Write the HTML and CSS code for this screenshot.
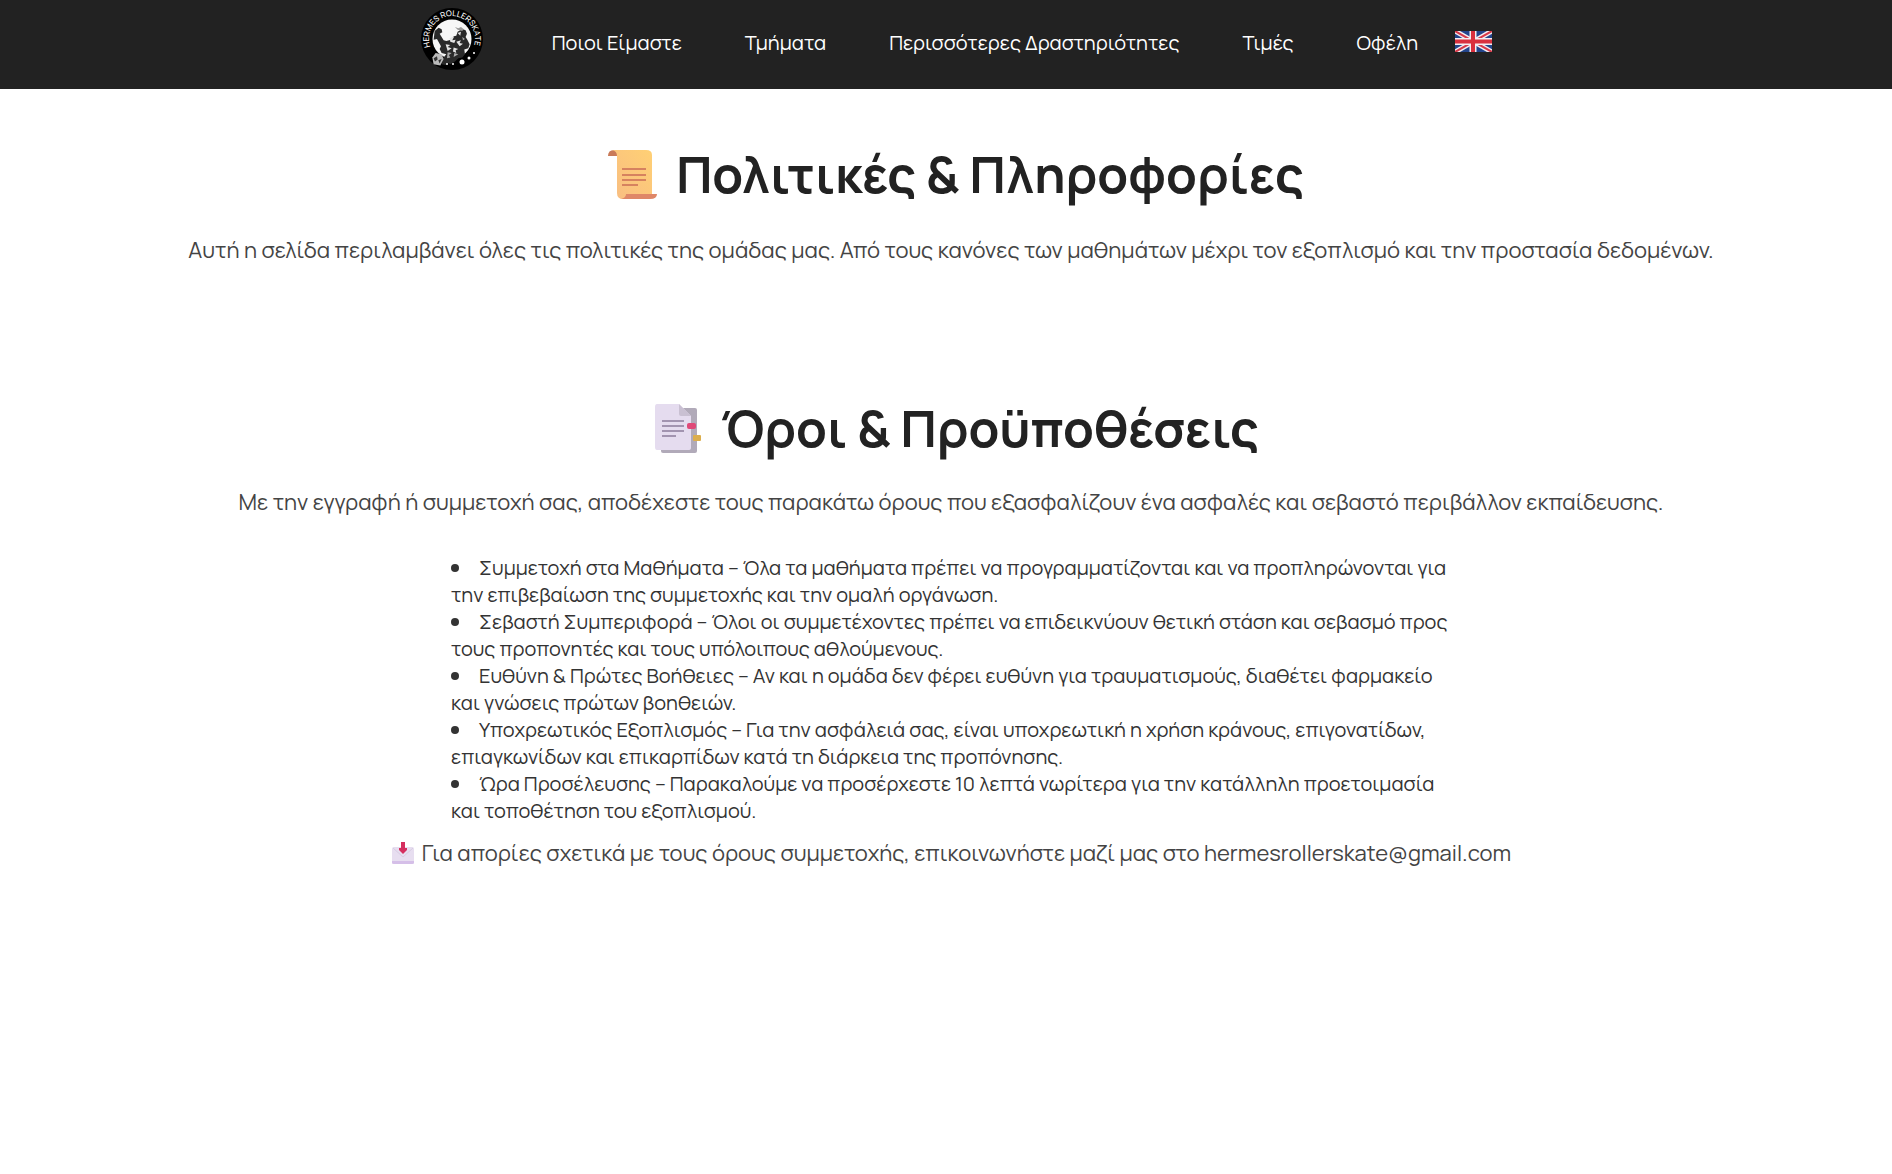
FILE: index.html
```html
<!DOCTYPE html>
<html lang="el">
<head>
<meta charset="utf-8">
<meta name="viewport" content="width=device-width, initial-scale=1">
<title>Πολιτικές &amp; Πληροφορίες</title>
<link rel="stylesheet" href="styles.css">
</head>
<body>
<header class="site-header">
  <a class="logo" href="#" aria-label="Hermes Rollerskate">
    <svg viewBox="0 0 64 64" width="64" height="64">
      <circle cx="32" cy="32" r="31" fill="#000"/>
      <circle cx="32" cy="32" r="19.500" fill="#f6f6f6"/>
      <path id="ring" d="M10.400 40A23 23 0 1 1 53.600 40" fill="none"/>
      <text class="logo-text"><textPath href="#ring">HERMES ROLLERSKATE</textPath></text>
      <g transform="translate(-1 -2) scale(.333)">
        <path d="M47 78l12-10 9 5 2 9-8 4 12 20 8 2 14-4 8-10 8-2 4-12 14-8 10 4 4 10-4 10 6 10 6 12-4 12-12 4 2 14-8 10-12 2-10 10-14 8-6-4-8 6-12-2 6-20 8-10-14-4-6-12 4-8-12-22-10 2z" fill="#2a2a2a"/>
        <path d="M108 66l10 4 8-4 8 6-4 6-14-4z" fill="#999"/>
        <path d="M92 100l14-6-6 12 10-2-4 10-12-4zM116 84l10-4-2 12zM112 110l14-4-4 8 10 2-10 8zM80 118l14 2-8 6 12 4-12 8zM104 128l14 4-8 4 2 8-10-4z" fill="#e4e4e4"/>
        <path d="M86 142l12 2-8 6 4 8-10 2zM106 144l12 4-14 8zM130 96l8 6-6 4z" fill="#aaa"/>
        <path d="M40 158l10-14 18 4 6 14-10 20-20-4z" fill="#bbb"/>
        <path d="M44 160l10-6 2 10-8 6zM58 166l10-4-6 14z" fill="#333"/>
      </g>
      <circle cx="27" cy="57" r="1" fill="#fff"/>
      <circle cx="33" cy="57" r="1" fill="#fff"/>
      <circle cx="42" cy="55" r="2.500" fill="#fff"/>
      <circle cx="49" cy="51" r="1.500" fill="#fff"/>
      <circle cx="54" cy="46" r="1" fill="#fff"/>
    </svg>
  </a>
  <nav class="menu">
    <a href="#">Ποιοι Είμαστε</a>
    <a href="#">Τμήματα</a>
    <a href="#">Περισσότερες Δραστηριότητες</a>
    <a href="#">Τιμές</a>
    <a href="#">Οφέλη</a>
  </nav>
  <a class="language" href="#" aria-label="English">
    <svg viewBox="0 0 37 21" width="37" height="21">
      <path fill="#23458c" d="M0 0h37v21H0z"/>
      <path d="M0 0l37 21M37 0L0 21" stroke="#f3eef2" stroke-width="5"/>
      <path d="M0 0l37 21M37 0L0 21" stroke="#d63a4a" stroke-width="2"/>
      <path d="M18 0v21M0 10.500h37" stroke="#f3eef2" stroke-width="7"/>
      <path d="M18 0v21M0 10.500h37" stroke="#d9303e" stroke-width="4"/>
    </svg>
  </a>
</header>
<main class="content">
  <section class="intro">
    <h1 class="title">
      <svg viewBox="0 -1 50 50" width="50" height="50" aria-hidden="true">
        <defs><linearGradient id="paper" x1="1" y1="0" x2="0" y2="1"><stop offset="0" stop-color="#ffd074"/><stop offset="1" stop-color="#f8bd83"/></linearGradient></defs>
        <path d="M0 6q0-6 6-6l5 2v4H0z" fill="#c97a58"/>
        <path d="M4 0h34q6 0 6 5v42q-2 2-8 2H15q-6 0-6-6V6q0-5-5-6z" fill="url(#paper)"/>
        <path d="M18 44h31q0 5-7 5H13q5-1 5-5z" fill="#df8768"/>
        <path d="M14 19h24M14 25h24M14 30h24M14 35h16" stroke="#d6825f" stroke-width="2"/>
      </svg>
      <span>Πολιτικές &amp; Πληροφορίες</span>
    </h1>
    <p class="lead">Αυτή η σελίδα περιλαμβάνει όλες τις πολιτικές της ομάδας μας. Από τους κανόνες των μαθημάτων μέχρι τον εξοπλισμό και την προστασία δεδομένων.</p>
  </section>
  <section class="terms">
    <h2 class="title">
      <svg viewBox="0 -1 50 50" width="50" height="50" aria-hidden="true">
        <rect x="8" y="4" width="36" height="45" rx="2" fill="#b1aab9"/>
        <path d="M4 0h22l12 12v32q0 2-3 2H4q-2 0-2-3V3q0-3 2-3z" fill="#e5dcef"/>
        <path d="M26 0l12 12H28q-2 0-2-2z" fill="#c9c0d2"/>
        <path d="M9 17h22M9 22h22M9 27h22M9 32h14" stroke="#a294b0" stroke-width="2"/>
        <rect x="34" y="19" width="9" height="6" rx="2" fill="#df4978"/>
        <rect x="40" y="31" width="8" height="6" rx="1" fill="#dcae4d"/>
      </svg>
      <span>Όροι &amp; Προϋποθέσεις</span>
    </h2>
    <p class="lead">Με την εγγραφή ή συμμετοχή σας, αποδέχεστε τους παρακάτω όρους που εξασφαλίζουν ένα ασφαλές και σεβαστό περιβάλλον εκπαίδευσης.</p>
    <ul class="rules">
      <li>Συμμετοχή στα Μαθήματα – Όλα τα μαθήματα πρέπει να προγραμματίζονται και να προπληρώνονται για την επιβεβαίωση της συμμετοχής και την ομαλή οργάνωση.</li>
      <li>Σεβαστή Συμπεριφορά – Όλοι οι συμμετέχοντες πρέπει να επιδεικνύουν θετική στάση και σεβασμό προς τους προπονητές και τους υπόλοιπους αθλούμενους.</li>
      <li>Ευθύνη &amp; Πρώτες Βοήθειες – Αν και η ομάδα δεν φέρει ευθύνη για τραυματισμούς, διαθέτει φαρμακείο και γνώσεις πρώτων βοηθειών.</li>
      <li>Υποχρεωτικός Εξοπλισμός – Για την ασφάλειά σας, είναι υποχρεωτική η χρήση κράνους, επιγονατίδων, επιαγκωνίδων και επικαρπίδων κατά τη διάρκεια της προπόνησης.</li>
      <li>Ώρα Προσέλευσης – Παρακαλούμε να προσέρχεστε 10 λεπτά νωρίτερα για την κατάλληλη προετοιμασία και τοποθέτηση του εξοπλισμού.</li>
    </ul>
    <p class="contact">
      <svg viewBox="0 0 24 24" width="24" height="24" aria-hidden="true">
        <rect x="1" y="6" width="22" height="17" rx="2" fill="#e7def0"/>
        <path d="M1 20h22v2q0 1-2 1H3q-2 0-2-1z" fill="#d5bfe8"/>
        <path d="M2 7l10 9L22 7" fill="none" stroke="#d8cde3"/>
        <path d="M10 1h4v6h2v2l-4 4-4-4V7h2z" fill="#d52f5f"/>
      </svg>
      <span>Για απορίες σχετικά με τους όρους συμμετοχής, επικοινωνήστε μαζί μας στο hermesrollerskate@gmail.com</span>
    </p>
  </section>
</main>
</body>
</html>
```
FILE: styles.css
```css
* {
  box-sizing: border-box;
}

body {
  margin: 0;
  background: #fff;
  color: #222;
  font-family: Manrope, Inter, "Open Sans", sans-serif;
}

.site-header {
  display: flex;
  justify-content: center;
  align-items: flex-start;
  min-height: 89px;
  padding: 7px 0 0 20px;
  background: #222;
}

.logo,
.language {
  display: flex;
}

.logo-text {
  fill: #fff;
  font-size: 8px;
  font-weight: 500;
}

.menu {
  display: flex;
  gap: 63px;
  margin: 0 37px 0 68px;
  padding-top: 22px;
}

.menu a {
  color: #fff;
  font-size: 20px;
  line-height: 28px;
  text-decoration: none;
}

.language {
  padding-top: 24px;
}

.content {
  padding: 52px 0 56px 10px;
}

.title {
  display: flex;
  justify-content: center;
  align-items: center;
  gap: 18px;
  margin: 0;
  padding-left: 10px;
  font-size: 50px;
  font-weight: 700;
  line-height: 66px;
}

.lead {
  margin: 26px 0 0;
  color: #444;
  font-size: 22px;
  line-height: 34px;
  text-align: center;
}

.terms {
  padding-top: 128px;
}

.terms .lead {
  margin-top: 24px;
}

.rules {
  max-width: 1000px;
  margin: 35px auto 0;
  padding: 0;
  color: #333;
  font-size: 20px;
  line-height: 27px;
  list-style: none;
}

.rules li::before {
  content: "";
  display: inline-block;
  width: 8px;
  height: 8px;
  margin: 0 20px 4px 0;
  border-radius: 50%;
  background: #333;
  vertical-align: middle;
}

.contact {
  display: flex;
  justify-content: center;
  align-items: center;
  gap: 7px;
  margin: 12px 0 0;
  color: #444;
  font-size: 22px;
  line-height: 34px;
}
```
